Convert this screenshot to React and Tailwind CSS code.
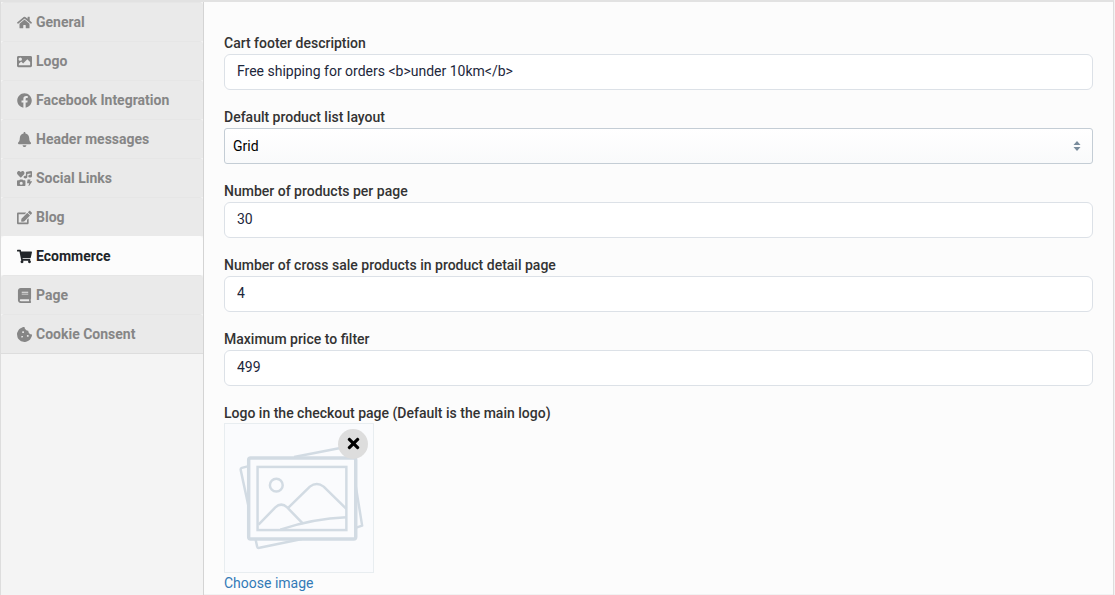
import { FaHome, FaImage, FaFacebook, FaBell, FaIcons, FaEdit, FaShoppingCart, FaBook, FaCookieBite, FaTimes } from "react-icons/fa";

const tabs = [
  { label: "General", icon: FaHome },
  { label: "Logo", icon: FaImage },
  { label: "Facebook Integration", icon: FaFacebook },
  { label: "Header messages", icon: FaBell },
  { label: "Social Links", icon: FaIcons },
  { label: "Blog", icon: FaEdit },
  { label: "Ecommerce", icon: FaShoppingCart, active: true },
  { label: "Page", icon: FaBook },
  { label: "Cookie Consent", icon: FaCookieBite },
];

function Tab({ label, icon: Icon, active }) {
  const tone = active
    ? "border-[#fcfcfc] bg-[#fcfcfc] text-[#212529]"
    : "border-[#e6e6e6] bg-[#eaeaea] text-[#868686]";
  return (
    <li>
      <a
        href="#"
        aria-current={active ? "page" : undefined}
        className={`flex h-[39px] items-center gap-1 rounded-t border-t pl-[15px] text-sm font-bold ${tone}`}
      >
        <span className="flex w-4 justify-center">
          <Icon size={15} />
        </span>
        {label}
      </a>
    </li>
  );
}

function Field({ id, label, children }) {
  return (
    <div className="mb-[17px]">
      <label htmlFor={id} className="block text-sm leading-[21px] font-medium text-[#333333]">
        {label}
      </label>
      {children}
    </div>
  );
}

function TextField({ id, label, value }) {
  return (
    <Field id={id} label={label}>
      <input
        id={id}
        type="text"
        defaultValue={value}
        className="block h-9 w-full rounded-md border border-[#dce1e7] bg-white px-3 pb-0.5 text-sm text-[#1d273b]"
      />
    </Field>
  );
}

function Placeholder() {
  return (
    <svg viewBox="0 0 150 150" className="block h-full w-full" fill="none" stroke="#d2dbe3" strokeWidth="2.5" strokeLinejoin="round">
      <path d="M70 33.500L126 22.500L139 103L133 105" />
      <path d="M23 43L17 44.500Q15.500 45 16 47L32.500 124Q33 126 35 125.500L78 116.500" />
      <rect x="24" y="34.500" width="108.500" height="82" rx="2" fill="#fafbfd" strokeWidth="3.500" />
      <rect x="33" y="43.500" width="90" height="64" strokeLinejoin="miter" />
      <circle cx="52" cy="62" r="6.500" />
      <path d="M34 102L51 84.500Q57 79 63 84.500L79 101" />
      <path d="M64 85L86 63.500Q93 58 100 63.500L123 86" />
      <path d="M56 107C74 101 97 95.500 123 94.500" />
    </svg>
  );
}

export default function App() {
  return (
    <div className="flex min-h-screen flex-col bg-[#f3f3f3] pr-px font-[Roboto,sans-serif]">
      <div className="flex grow border-x border-t-2 border-[#dddddd] border-t-[#e2e2e2]">
        <nav aria-label="Theme options" className="w-[203px] shrink-0 border-r border-[#d4d4d4] bg-[#f4f4f4]">
          <ul className="border-b border-[#dddddd]">
            {tabs.map((tab) => (
              <Tab key={tab.label} {...tab} />
            ))}
          </ul>
        </nav>
        <main className="min-w-0 grow border-b border-[#f2f2f2] bg-[#fcfcfc] px-5 pt-[31px]">
          <TextField id="cart-footer" label="Cart footer description" value="Free shipping for orders <b>under 10km</b>" />
          <Field id="list-layout" label="Default product list layout">
            <div className="relative">
              <select
                id="list-layout"
                defaultValue="Grid"
                className="block h-9 w-full appearance-none rounded-[3px] border border-[#c4cdd5] bg-linear-to-b from-white to-[#f9fafb] px-2 text-sm text-black"
              >
                <option>Grid</option>
                <option>List</option>
              </select>
              <svg viewBox="0 0 8 10" className="pointer-events-none absolute top-[13px] right-3 h-2.5 w-2" fill="#798c9c">
                <path d="M4 0L7.500 4H0.500ZM4 10L7.500 6H0.500Z" />
              </svg>
            </div>
          </Field>
          <TextField id="per-page" label="Number of products per page" value="30" />
          <TextField id="cross-sale" label="Number of cross sale products in product detail page" value="4" />
          <TextField id="max-price" label="Maximum price to filter" value="499" />
          <div role="group" aria-labelledby="checkout-logo">
            <p id="checkout-logo" className="text-sm leading-5 font-medium text-[#333333]">
              Logo in the checkout page (Default is the main logo)
            </p>
            <div className="relative h-[150px] w-[150px] border border-[#e8edf0] bg-[#fafbfd]">
              <Placeholder />
              <button
                type="button"
                aria-label="Remove image"
                className="absolute top-[5px] right-[5px] flex h-[30px] w-[30px] items-center justify-center rounded-full bg-[#dddddd] pb-0.5 text-black"
              >
                <FaTimes size={17} />
              </button>
            </div>
            <a href="#" className="block w-fit text-sm leading-5 text-[#337ab7]">
              Choose image
            </a>
          </div>
        </main>
      </div>
    </div>
  );
}
